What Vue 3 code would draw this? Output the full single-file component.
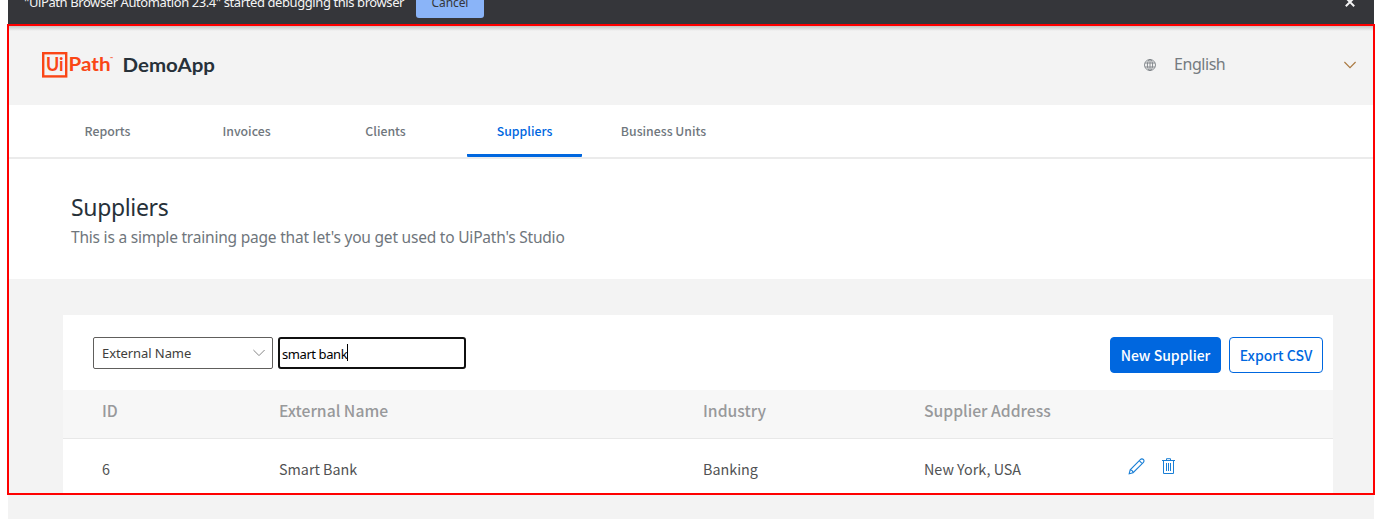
<script setup>
import { ref } from 'vue'

const tabs = ['Reports', 'Invoices', 'Clients', 'Suppliers', 'Business Units']
const active = ref('Suppliers')
const columns = ['ID', 'External Name', 'Industry', 'Supplier Address', '']
const rows = [{ id: '6', name: 'Smart Bank', industry: 'Banking', address: 'New York, USA' }]
const query = 'smart bank'
</script>

<template>
  <div class="window">
    <div class="infobar">
      <span class="info-text">"UiPath Browser Automation 23.4" started debugging this browser</span>
      <span class="cancel">Cancel</span>
      <svg class="close" width="10" height="10" viewBox="0 0 10 10">
        <path d="M.8 .8L9.2 9.2M9.2 .8L.8 9.2" stroke="#f4f4f4" stroke-width="2" fill="none" />
      </svg>
    </div>

    <header class="header">
      <svg class="logo" width="180" height="30" viewBox="0 0 180 30">
        <rect x="1.2" y="1.2" width="23" height="23.2" fill="none" stroke="#fa4616" stroke-width="2.4" />
        <g fill="#fa4616" class="logo-word">
          <text x="4" y="19.3" textLength="17.6" lengthAdjust="spacingAndGlyphs">Ui</text>
          <text x="26.6" y="19.3" textLength="42" lengthAdjust="spacingAndGlyphs">Path</text>
          <text x="68" y="8" class="tm">™</text>
        </g>
        <text x="80.6" y="20.3" textLength="92.4" lengthAdjust="spacingAndGlyphs" class="app-name">DemoApp</text>
      </svg>
      <div class="language">
        <svg width="12" height="12" viewBox="0 0 12 12" fill="none" stroke="#7d8287" stroke-width=".9">
          <circle cx="6" cy="6" r="5.5" />
          <ellipse cx="6" cy="6" rx="2.6" ry="5.5" />
          <path d="M6 .5V11.5M1 4H11M1 8H11" />
        </svg>
        <span class="lang-name">English</span>
        <svg class="chev" width="12" height="8" viewBox="0 0 12 8" fill="none" stroke="#ab7a42" stroke-width="1.15">
          <path d="M.4 1L6 6.6L11.6 1" />
        </svg>
      </div>
    </header>

    <nav class="nav">
      <a v-for="t in tabs" :key="t" class="tab" :class="{ active: t === active }">{{ t }}</a>
    </nav>

    <section class="intro">
      <h1>Suppliers</h1>
      <p>This is a simple training page that let's you get used to UiPath's Studio</p>
    </section>

    <main class="content">
      <div class="card">
        <div class="toolbar">
          <div class="select">
            <span>External Name</span>
            <svg width="12" height="8" viewBox="0 0 12 8" fill="none" stroke="#858585" stroke-width="1">
              <path d="M.4 1L6 6.6L11.6 1" />
            </svg>
          </div>
          <div class="search"><span>{{ query }}</span><i class="caret"></i></div>
          <div class="btn primary"><span>New Supplier</span></div>
          <div class="btn outline"><span>Export CSV</span></div>
        </div>
        <div class="grid thead">
          <span v-for="c in columns" :key="c">{{ c }}</span>
        </div>
        <div v-for="r in rows" :key="r.id" class="grid row">
          <span>{{ r.id }}</span>
          <span>{{ r.name }}</span>
          <span>{{ r.industry }}</span>
          <span>{{ r.address }}</span>
          <div class="actions">
            <svg width="17" height="17" viewBox="0 0 17 17" fill="none" stroke="#1a7fd6" stroke-width="1.1">
              <path d="M1.2 15.7L2.2 11.8L12.3 1.7C13.3 .7 14.5 .6 15.4 1.5C16.3 2.4 16.2 3.6 15.2 4.6L5.1 14.7L1.2 15.7ZM2.2 11.8Q4.7 12.2 5.1 14.7M11.3 2.7L14.2 5.6" />
            </svg>
            <svg width="13" height="17" viewBox="0 0 13 17" fill="none" stroke="#1a7fd6" stroke-width="1">
              <path d="M0 2.5H13M4.5 2.5V.7H8.5V2.5M1.5 2.5V15.5H11.5V2.5M4.5 5V13M6.5 5V13M8.5 5V13" />
            </svg>
          </div>
        </div>
      </div>
    </main>
    <div class="highlight"></div>
  </div>
</template>

<style>
body { background: #fff; overflow: hidden; }
</style>

<style scoped>
* { box-sizing: border-box; }
.window {
  position: relative;
  width: 1382px;
  height: 519px;
  padding: 0 8px;
  overflow: hidden;
  background: #fff;
  font-family: "Noto Sans CJK SC", "Noto Sans", sans-serif;
}
.infobar {
  display: flex;
  align-items: flex-start;
  height: 25px;
  padding-left: 16px;
  background: #35363a;
  color: #f4f4f4;
  font: 13px/18px "Noto Sans", sans-serif;
  white-space: nowrap;
}
.info-text { width: 392px; margin-top: -7px; letter-spacing: -.41px; }
.cancel {
  width: 68px;
  height: 32px;
  margin-top: -14px;
  border-radius: 3px;
  background: #8ab4f8;
  color: #35363a;
  font-size: 12px;
  line-height: 33px;
  letter-spacing: -.1px;
  text-align: center;
}
.close { margin: -3px 19px 0 auto; }
.header {
  display: flex;
  align-items: flex-start;
  justify-content: space-between;
  height: 80px;
  padding: 27px 18px 0 34px;
  background: linear-gradient(#bdbdbd, #f3f3f3 6px);
}
.logo-word { font: 700 19px Lato, sans-serif; }
.logo-word .tm { font-size: 4px; }
.app-name { font: 700 19px Lato, sans-serif; fill: #273139; }
.language { display: flex; align-items: center; width: 212px; height: 26px; }
.lang-name { margin: -2px 0 0 18px; font: 16px/24px "Noto Sans", sans-serif; letter-spacing: -.45px; color: #757b80; }
.chev { margin-left: auto; }
.nav {
  display: flex;
  gap: 24px;
  height: 54px;
  padding-left: 42px;
  border-bottom: 2px solid #ebebeb;
}
.tab {
  width: 115px;
  height: 52px;
  color: #70777d;
  font-size: 12.3px;
  font-weight: 500;
  line-height: 53px;
  text-align: center;
  white-space: nowrap;
}
.tab.active { border-bottom: 3px solid #0067df; border-radius: 1px; color: #0067df; }
.intro { height: 120px; padding: 30px 63px 0; font-family: "Noto Sans", sans-serif; white-space: nowrap; }
h1 { margin: 0; color: #273139; font-size: 23px; font-weight: 400; line-height: 36px; letter-spacing: -.35px; }
p { margin: 0; color: #6f767c; font-size: 15.5px; line-height: 24px; letter-spacing: -.21px; }
.content { height: 240px; padding: 36px 41px 0 55px; background: #f3f3f3; }
.card { height: 179px; overflow: hidden; background: #fff; }
.toolbar { display: flex; align-items: flex-start; height: 75px; padding: 22px 10px 0 30px; }
.select {
  display: flex;
  align-items: center;
  justify-content: space-between;
  width: 180px;
  height: 32px;
  padding: 0 7px 0 8px;
  border: 1px solid #605e5c;
  border-radius: 2px;
  color: #403e3c;
  font: 13px "Noto Sans", sans-serif;
  letter-spacing: -.08px;
}
.search {
  display: flex;
  align-items: center;
  width: 188px;
  height: 32px;
  margin-left: 5px;
  padding: 2px 2px 0;
  border: 2px solid #101010;
  border-radius: 3px;
  color: #000;
  font: 13px "Noto Sans", sans-serif;
  letter-spacing: -.42px;
}
.caret { width: 1px; height: 17px; margin-top: -3px; background: #000; }
.btn { height: 36px; border: 1px solid #0067df; border-radius: 4px; font-size: 14px; font-weight: 500; line-height: 35px; text-align: center; white-space: nowrap; }
.primary { width: 111px; margin-left: auto; background: #0067df; color: #fff; }
.outline { width: 94px; margin-left: 8px; color: #0067df; }
.grid { display: grid; grid-template-columns: 177px 424px 221px 205px 1fr; padding-left: 39px; white-space: nowrap; }
.thead { height: 49px; border-bottom: 1px solid #e8e8e8; background: #f7f7f7; color: #98999b; font-size: 15.7px; font-weight: 500; line-height: 41px; }
.row { height: 55px; color: #515253; font-size: 14.35px; line-height: 60px; }
.actions { display: flex; align-items: flex-start; gap: 16px; margin-left: -1px; padding-top: 19px; }
.actions svg:last-child { margin-left: 1px; }
.highlight {
  position: absolute;
  left: 7px;
  top: 24px;
  width: 1368px;
  height: 471px;
  border: 2px solid #fe0000;
}
</style>
